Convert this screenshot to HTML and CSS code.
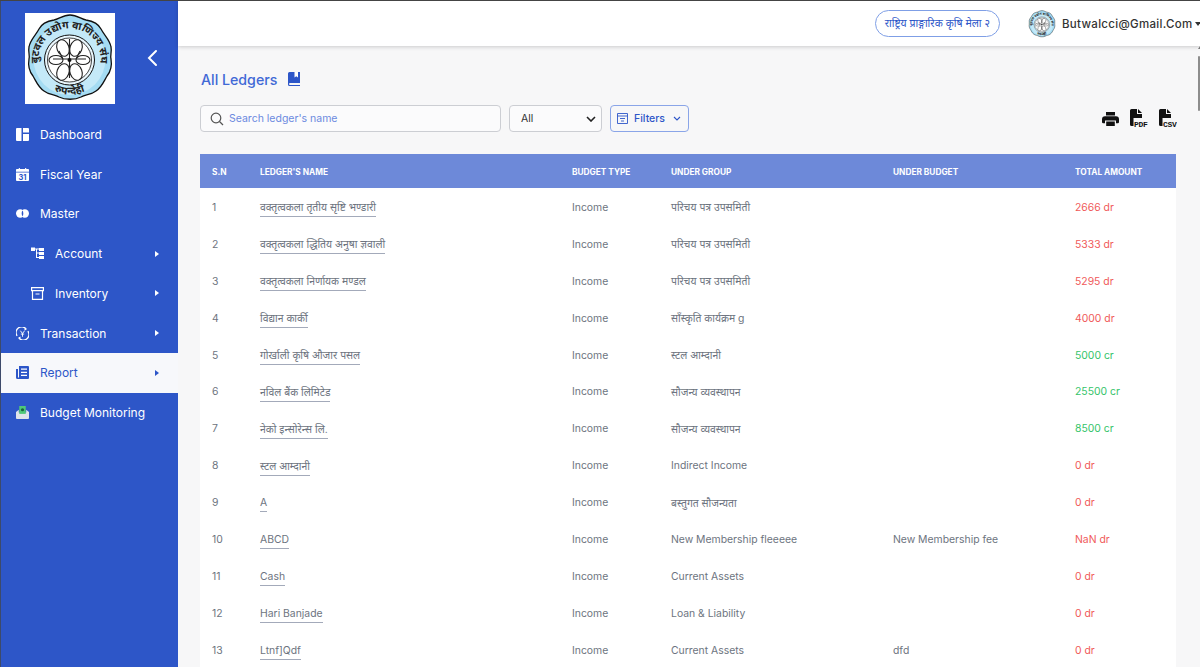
FILE: index.html
```html
<!DOCTYPE html>
<html lang="en">
<head>
  <meta charset="UTF-8">
  <title>All Ledgers</title>
  <link rel="stylesheet" href="styles.css">
</head>
<body>
  <div class="app">
    <aside class="sidebar">
      <div class="brand">
        <div class="logo">
          <svg width="90" height="90" viewBox="0 0 90 90">
            <symbol id="seal" viewBox="0 0 90 90">
              <path d="M45 2 C52 2 56 6 61 7 C67 8 73 10 76 16 C79 22 85 27 86 34 C87 39 85 42 86 46 C87 52 86 58 82 63 C79 68 77 74 71 78 C66 82 60 81 56 84 C50 87 40 87 34 84 C30 81 24 82 19 78 C13 74 11 68 8 63 C4 58 3 52 4 46 C5 42 3 39 4 34 C5 27 11 22 14 16 C17 10 23 8 29 7 C34 6 38 2 45 2 Z" fill="#a5dcf3" stroke="#111" stroke-width="1.300"/>
              <circle cx="44.500" cy="46" r="36" fill="#c4e9f8"/>
              <path id="seal-top" d="M14 52 A31 31 0 1 1 75 52" fill="none"/>
              <path id="seal-bottom" d="M24 75 A36 36 0 0 0 65 75" fill="none"/>
              <text class="seal-text"><textPath href="#seal-top" startOffset="50%" text-anchor="middle">बुटवल उद्योग वाणिज्य संघ</textPath></text>
              <text class="seal-text"><textPath href="#seal-bottom" startOffset="50%" text-anchor="middle">रुपन्देही</textPath></text>
              <circle cx="44.500" cy="47" r="25" fill="#e9f6fc" stroke="#111"/>
              <circle cx="44.500" cy="47" r="22" fill="#fff" stroke="#111" stroke-width=".8"/>
              <g fill="#fff" stroke="#222" stroke-width="1.100">
                <ellipse cx="38" cy="35" rx="6" ry="8.500" transform="rotate(-20 38 35)"/>
                <ellipse cx="51" cy="35" rx="6" ry="8.500" transform="rotate(20 51 35)"/>
                <ellipse cx="38" cy="59" rx="6" ry="8.500" transform="rotate(20 38 59)"/>
                <ellipse cx="51" cy="59" rx="6" ry="8.500" transform="rotate(-20 51 59)"/>
                <ellipse cx="31" cy="47" rx="7" ry="4.500"/>
                <ellipse cx="58" cy="47" rx="7" ry="4.500"/>
              </g>
              <path d="M44.500 26 V65 M28 46 H61 M34 38 L38 46 M55 38 L51 46" stroke="#222" stroke-width="1.100" fill="none"/>
              <circle cx="44.500" cy="47" r="2" fill="#111"/>
            </symbol>
            <use href="#seal"/>
          </svg>
        </div>
        <svg class="collapse" width="12" height="18" viewBox="0 0 12 18"><path d="M10 2 L3 9 L10 16" fill="none" stroke="#fff" stroke-width="2" stroke-linecap="round"/></svg>
      </div>
      <nav class="menu">
        <a class="item">
          <svg class="ico" viewBox="0 0 13 13"><path d="M1 0h4.500v13H1a1 1 0 0 1-1-1V1a1 1 0 0 1 1-1zM7 0h5a1 1 0 0 1 1 1v3.500H7zM7 6h6v6a1 1 0 0 1-1 1H7z" fill="#fff"/></svg>
          <span>Dashboard</span>
        </a>
        <a class="item">
          <svg class="ico" viewBox="0 0 14 14"><path d="M3 0h1.200v1h5.600V0H11v1h2a1 1 0 0 1 1 1v2H0V2a1 1 0 0 1 1-1h2zM0 4.800h14V13a1 1 0 0 1-1 1H1a1 1 0 0 1-1-1z" fill="#fff"/><text x="7" y="12.600" class="ico-num">31</text></svg>
          <span>Fiscal Year</span>
        </a>
        <a class="item">
          <svg class="ico" viewBox="0 0 14 14"><circle cx="4.500" cy="7" r="4.500" fill="#fff"/><circle cx="9.500" cy="7" r="4.500" fill="#fff"/><path d="M7 3.800C5.800 5.500 5.800 8.500 7 10.200C8.200 8.500 8.200 5.500 7 3.800z" fill="#2d56c8"/></svg>
          <span>Master</span>
        </a>
        <a class="item sub has-arrow">
          <svg class="ico" viewBox="0 0 13 13"><path d="M0 .5h4v3.500H0zM4 1.500h4v1H6v3h2v1H6v3.500h2v1H5V2.500H4zM8 1h5v3H8zM8 5h5v3H8zM8 9h5v3H8z" fill="#fff"/></svg>
          <span>Account</span>
        </a>
        <a class="item sub has-arrow">
          <svg class="ico" viewBox="0 0 13 13"><path d="M.6.6h11.800v3H.6zM1.500 3.600v8.800h10V3.600M4.500 7h4" fill="none" stroke="#fff" stroke-width="1.200"/></svg>
          <span>Inventory</span>
        </a>
        <a class="item has-arrow">
          <svg class="ico" viewBox="0 0 14 14"><path d="M1.200 9.500A6 6 0 0 1 11 2.300M12.800 4.500A6 6 0 0 1 3 11.700" fill="none" stroke="#fff" stroke-width="1.400"/><path d="M9.500 .8 11.600 2.800 9 3.800zM4.500 13.200 2.400 11.200 5 10.200z" fill="#fff"/><path d="M4.700 4 7 7l2.300-3M7 7v3.500M5.200 7.600h3.600" fill="none" stroke="#fff"/></svg>
          <span>Transaction</span>
        </a>
        <a class="item active has-arrow">
          <svg class="ico" viewBox="0 0 13 13"><path d="M3 0h9a1 1 0 0 1 1 1v11a1 1 0 0 1-1 1H1.500A1.500 1.500 0 0 1 0 11.500V3h2v8.500h1z" fill="#2d56c8"/><path d="M5 3.200h6M5 6.300h6M5 9.400h6" stroke="#fff" stroke-width="1.200"/></svg>
          <span>Report</span>
        </a>
        <a class="item">
          <svg class="ico" viewBox="0 0 14 14"><path d="M0 6.500l3-2.500v3h8V4l3 2.500V13a1 1 0 0 1-1 1H1a1 1 0 0 1-1-1z" fill="#dfe4ea"/><path d="M3.500 0h7v8.500h-7z" fill="#4fc878"/><circle cx="7" cy="4" r="1.700" fill="#17663a"/></svg>
          <span>Budget Monitoring</span>
        </a>
      </nav>
    </aside>

    <div class="main">
      <header class="topbar">
        <a class="event-pill">राष्ट्रिय प्राङ्गारिक कृषि मेला २</a>
        <div class="user">
          <svg class="avatar" width="28" height="28" viewBox="0 0 90 90"><use href="#seal"/></svg>
          <span class="user-name">Butwalcci@Gmail.Com</span>
          <span class="caret"></span>
        </div>
      </header>

      <main class="content">
        <div class="title-row">
          <h1>All Ledgers</h1>
          <svg width="12" height="14" viewBox="0 0 12 14"><path d="M1.500 0H12v11H2a1 1 0 0 0 0 2h10v1H1.500A1.500 1.500 0 0 1 0 12.500v-11A1.500 1.500 0 0 1 1.500 0z" fill="#2d56c8"/><path d="M6.500 0h3.500v5.500L8.250 4.200 6.500 5.500z" fill="#fff"/></svg>
        </div>

        <div class="toolbar">
          <div class="search">
            <svg width="14" height="14" viewBox="0 0 14 14"><circle cx="6" cy="6" r="4.800" fill="none" stroke="#555" stroke-width="1.200"/><path d="M9.500 9.500 13 13" stroke="#555" stroke-width="1.200"/></svg>
            <span>Search ledger's name</span>
          </div>
          <div class="select">
            <span>All</span>
            <svg width="10" height="6" viewBox="0 0 10 6"><path d="M1 1l4 4 4-4" fill="none" stroke="#222" stroke-width="1.600"/></svg>
          </div>
          <div class="filters">
            <svg width="11" height="11" viewBox="0 0 11 11"><path d="M.5.500h10v10H.5zM.5 3h10M3 5.500h5M4 8h3" fill="none" stroke="#2d56c8" stroke-width=".9"/></svg>
            <span>Filters</span>
            <svg width="8" height="5" viewBox="0 0 8 5"><path d="M1 1l3 3 3-3" fill="none" stroke="#2d56c8" stroke-width="1.100"/></svg>
          </div>
          <div class="exports">
            <svg class="print" width="17" height="14" viewBox="0 0 17 14"><path d="M4 0h9v3.500H4zM3 4.200h11A3 3 0 0 1 17 7.200V10a1.200 1.200 0 0 1-1.200 1.200H14V8.500H3v2.700H1.200A1.200 1.200 0 0 1 0 10V7.200A3 3 0 0 1 3 4.200zM4.200 9.500h8.600V14H4.200z" fill="#111"/></svg>
            <svg width="18" height="19" viewBox="0 0 18 19"><path d="M0 1.500A1.500 1.500 0 0 1 1.500 0H7v5h5v4H3.500v8H1.500A1.500 1.500 0 0 1 0 15.500zM8 0l4 4H8z" fill="#111"/><text x="4" y="17.500" class="file-tag">PDF</text></svg>
            <svg width="18" height="19" viewBox="0 0 18 19"><path d="M0 1.500A1.500 1.500 0 0 1 1.500 0H7v5h5v4H3.500v8H1.500A1.500 1.500 0 0 1 0 15.500zM8 0l4 4H8z" fill="#111"/><text x="4" y="17.500" class="file-tag">CSV</text></svg>
          </div>
        </div>

        <table class="ledgers">
          <thead>
            <tr><th>S.N</th><th>Ledger's Name</th><th>Budget Type</th><th>Under Group</th><th>Under Budget</th><th>Total Amount</th></tr>
          </thead>
          <tbody>
            <tr><td>1</td><td><a>वक्तृत्वकला तृतीय सृष्टि भण्डारी</a></td><td>Income</td><td>परिचय पत्र उपसमिती</td><td></td><td class="dr">2666 dr</td></tr>
            <tr><td>2</td><td><a>वक्तृत्वकला द्धितिय अनुषा ज्ञवाली</a></td><td>Income</td><td>परिचय पत्र उपसमिती</td><td></td><td class="dr">5333 dr</td></tr>
            <tr><td>3</td><td><a>वक्तृत्वकला निर्णायक मण्डल</a></td><td>Income</td><td>परिचय पत्र उपसमिती</td><td></td><td class="dr">5295 dr</td></tr>
            <tr><td>4</td><td><a>विद्यान कार्की</a></td><td>Income</td><td>साँस्कृति कार्यक्रम g</td><td></td><td class="dr">4000 dr</td></tr>
            <tr><td>5</td><td><a>गोर्खाली कृषि औजार पसल</a></td><td>Income</td><td>स्टल आम्दानी</td><td></td><td class="cr">5000 cr</td></tr>
            <tr><td>6</td><td><a>नविल बैंक लिमिटेड</a></td><td>Income</td><td>सौजन्य व्यवस्थापन</td><td></td><td class="cr">25500 cr</td></tr>
            <tr><td>7</td><td><a>नेको इन्सोरेन्स लि.</a></td><td>Income</td><td>सौजन्य व्यवस्थापन</td><td></td><td class="cr">8500 cr</td></tr>
            <tr><td>8</td><td><a>स्टल आम्दानी</a></td><td>Income</td><td>Indirect Income</td><td></td><td class="dr">0 dr</td></tr>
            <tr><td>9</td><td><a>A</a></td><td>Income</td><td>बस्तुगत सौजन्यता</td><td></td><td class="dr">0 dr</td></tr>
            <tr><td>10</td><td><a>ABCD</a></td><td>Income</td><td>New Membership fleeeee</td><td>New Membership fee</td><td class="dr">NaN dr</td></tr>
            <tr><td>11</td><td><a>Cash</a></td><td>Income</td><td>Current Assets</td><td></td><td class="dr">0 dr</td></tr>
            <tr><td>12</td><td><a>Hari Banjade</a></td><td>Income</td><td>Loan &amp; Liability</td><td></td><td class="dr">0 dr</td></tr>
            <tr><td>13</td><td><a>Ltnf]Qdf</a></td><td>Income</td><td>Current Assets</td><td>dfd</td><td class="dr">0 dr</td></tr>
          </tbody>
        </table>
      </main>
    </div>
    <div class="scroll-arrow"></div>
    <div class="scroll-thumb"></div>
  </div>
</body>
</html>
```

FILE: styles.css
```css
* {
  box-sizing: border-box;
}
html, body {
  height: 100%;
}
body {
  margin: 0;
  overflow: hidden;
  font-family: Inter, "Open Sans", "Noto Sans", sans-serif;
  background: #f7f7f8;
}
.app {
  display: flex;
  height: 667px;
  overflow: hidden;
  border-top: 1px solid #444;
  position: relative;
}
.sidebar {
  width: 178px;
  flex: none;
  background: #2d56c8;
  border-left: 1px solid #3d4a6a;
}
.brand {
  display: flex;
  align-items: center;
  height: 113.500px;
  padding: 11px 0 0 24px;
}
.logo {
  width: 90px;
  height: 91px;
  background: #fff;
  margin-bottom: 10px;
}
.seal-text {
  font-size: 10.500px;
  font-weight: 700;
  fill: #222;
}
.collapse {
  margin: 0 0 10px 31px;
}
.menu {
  display: flex;
  flex-direction: column;
}
.item {
  display: flex;
  align-items: center;
  height: 39.750px;
  padding-left: 15px;
  color: #fff;
  font-size: 12px;
  position: relative;
}
.item .ico {
  width: 13px;
  height: 13px;
  margin-right: 11px;
  flex: none;
}
.ico-num {
  font-size: 8px;
  font-weight: 700;
  text-anchor: middle;
  fill: #2d56c8;
}
.item.sub {
  padding-left: 30px;
}
.has-arrow::after {
  content: "";
  position: absolute;
  right: 19px;
  top: 50%;
  margin-top: -3px;
  border-left: 4px solid #fff;
  border-top: 3px solid transparent;
  border-bottom: 3px solid transparent;
}
.item.active {
  background: #f7f8fb;
  color: #2d56c8;
}
.item.active::after {
  border-left-color: #2d56c8;
}

.main {
  flex: 1;
  min-width: 0;
}
.topbar {
  display: flex;
  align-items: center;
  justify-content: flex-end;
  height: 45px;
  background: #fff;
  box-shadow: 0 1px 4px rgba(0, 0, 0, 0.18);
  white-space: nowrap;
}
.event-pill {
  border: 1px solid #7f9fe6;
  border-radius: 14px;
  padding: 0 9px;
  height: 27px;
  line-height: 25px;
  color: #2d56c8;
  font-size: 10.500px;
  margin-right: 28px;
}
.user {
  display: flex;
  align-items: center;
  width: 172px;
  flex: none;
}
.avatar {
  flex: none;
  margin-right: 6px;
}
.user-name {
  font-size: 11.500px;
  font-weight: 500;
  color: #333;
  letter-spacing: 0.3px;
}
.caret {
  flex: none;
  margin-left: 3px;
  border-top: 4px solid #333;
  border-left: 3px solid transparent;
  border-right: 3px solid transparent;
}

.content {
  padding: 0 24px 0 22px;
}
.title-row {
  display: flex;
  align-items: center;
  gap: 11px;
  height: 24px;
  margin-top: 21px;
}
h1 {
  margin: 0 0 0 1px;
  font-size: 14.200px;
  font-weight: 500;
  color: #4169d6;
}
.toolbar {
  display: flex;
  align-items: center;
  margin-top: 14px;
  height: 27px;
}
.search {
  display: flex;
  align-items: center;
  gap: 5px;
  width: 301px;
  height: 27px;
  padding-left: 9px;
  background: #fbfbfc;
  border: 1px solid #ccced3;
  border-radius: 4px;
  color: #6c8ae0;
  font-size: 10.500px;
}
.select {
  display: flex;
  align-items: center;
  justify-content: space-between;
  width: 93px;
  height: 27px;
  margin-left: 8px;
  padding: 0 5px 0 11px;
  background: #fbfbfc;
  border: 1px solid #ccced3;
  border-radius: 4px;
  color: #333;
  font-size: 10.500px;
}
.filters {
  display: flex;
  align-items: center;
  width: 79px;
  height: 27px;
  margin-left: 8px;
  padding-left: 6px;
  border: 1px solid #8aa5e8;
  border-radius: 4px;
  color: #2d56c8;
  font-size: 10.500px;
  font-weight: 500;
}
.filters span {
  margin: 0 8px 0 6px;
}
.exports {
  display: flex;
  align-items: center;
  gap: 11px;
  margin-left: auto;
  margin-right: -1px;
}
.file-tag {
  font-family: "Liberation Mono", monospace;
  font-size: 8px;
  font-weight: 700;
  letter-spacing: -0.300px;
  fill: #111;
}

.ledgers {
  width: 976px;
  margin-top: 22px;
  border-collapse: collapse;
  table-layout: fixed;
  background: #fff;
  font-size: 10.400px;
  color: #6d7480;
}
.ledgers th {
  height: 34px;
  padding: 1px 0 0 12px;
  background: #6d89d9;
  color: #fff;
  font-size: 8.300px;
  font-weight: 700;
  text-align: left;
  text-transform: uppercase;
}
.ledgers td {
  height: 36.900px;
  padding: 2px 0 0 12px;
  white-space: nowrap;
}
.ledgers th:nth-child(1) { width: 48px; }
.ledgers th:nth-child(2) { width: 312px; }
.ledgers th:nth-child(3) { width: 99px; }
.ledgers th:nth-child(4) { width: 222px; }
.ledgers th:nth-child(5) { width: 182px; }
.ledgers td a {
  border-bottom: 1.500px solid #a3aaba;
  padding-bottom: 2px;
}
.ledgers td.dr {
  color: #f05a5a;
}
.ledgers td.cr {
  color: #35c46a;
}
.scroll-arrow {
  position: absolute;
  right: 0;
  top: 45px;
  border-bottom: 3px solid #777;
  border-left: 2px solid transparent;
}
.scroll-thumb {
  position: absolute;
  right: 0;
  top: 55px;
  width: 2px;
  height: 55px;
  background: #8d8d8d;
  border-radius: 2px;
}
```
